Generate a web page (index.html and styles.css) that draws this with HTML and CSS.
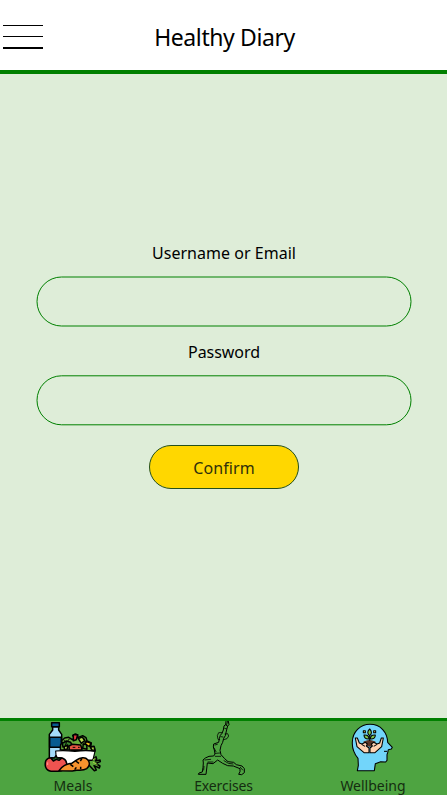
FILE: index.html
```html
<!DOCTYPE html>
<html lang="en">
<head>
<meta charset="utf-8">
<title>Healthy Diary</title>
<link rel="stylesheet" href="styles.css">
</head>
<body>
<header class="header">
  <button class="menu" aria-label="Menu"><span class="bar"></span><span class="bar"></span><span class="bar bar-thick"></span></button>
  <h1 class="title">Healthy Diary</h1>
</header>
<main class="main">
  <form class="form">
    <label class="label label-user" for="user">Username or Email</label>
    <input class="field field-user" id="user" type="text">
    <label class="label label-pass" for="pass">Password</label>
    <input class="field field-pass" id="pass" type="password">
    <button class="confirm" type="button">Confirm</button>
  </form>
</main>
<nav class="nav">
  <a class="item">
    <svg class="icon" width="56" height="53" viewBox="30 27 168 159" stroke="#000" stroke-width="4.5" stroke-linejoin="round">
      <path d="M50 32H73V44H50Z" fill="#075b91"/>
      <path d="M53 45H71V54L80 67V148H43V67L53 54Z" fill="#a4dcfa"/>
      <path d="M44 76H79V106H44Z" fill="#075b91"/>
      <path d="M76 113L77 97L84 94L79 87L89 78L101 76L112 83L119 79L113 71L121 66L128 69L128 77L143 71L153 77L156 87L169 93L167 103L178 105L180 117Z" fill="#69ad3b"/>
      <path d="M82 94L94 87L107 91L111 99L98 105L84 105Z" fill="#3c872e"/>
      <path d="M115 68L128 68L124 83L115 86Z" fill="#e6393e"/>
      <path d="M130 80L142 75L149 86L139 94Z" fill="#b6db4d"/>
      <path d="M153 88L168 94L163 103L151 98Z" fill="#ffc51b"/>
      <path d="M102 102L112 97L137 99L141 113L103 114Z" fill="#e85643"/>
      <path d="M145 96L155 98L156 112L143 109Z" fill="#5aa638"/>
      <path d="M88 104L98 99L97 111L88 113Z" fill="#bbda50"/>
      <path d="M166 106L177 103L180 115L171 114Z" fill="#b4d847"/>
      <path d="M86 84L94 92L103 81M94 92L90 103M146 78L151 90L143 99M113 106H121M129 106H134" fill="none" stroke-width="3"/>
      <path d="M62 117Q85 114 120 118Q155 114 180 118L174 143L160 160H80L64 143Z" fill="#fff" stroke-width="3.5"/>
      <path d="M33 145C39 136 49 136 60 139C80 133 94 141 95 155C95 170 83 179 67 178H48C30 174 28 158 33 145Z" fill="#ef5350"/>
      <path d="M48 139L59 137L63 131L67 138L81 138L72 145L64 142L55 147Z" fill="#24752b"/>
      <path d="M160 145L172 145L183 134L185 141L181 147L195 144L196 149L182 154L195 162L193 168L177 161L184 174L178 176L161 158Z" fill="#5aa638"/>
      <path d="M72 176C82 162 95 155 110 154L123 145C136 136 151 134 158 143C166 151 164 163 155 170C145 177 134 174 125 175L112 177Z" fill="#f7932e"/>
      <path d="M122 147L132 154M141 139L136 147M106 157L115 164M137 164V172M119 173L124 166" fill="none"/>
      <path d="M174 151L187 157M173 144L181 139" fill="none" stroke="#a4cf43" stroke-width="3"/>
      <path d="M38 151V159" fill="none" stroke="#ff9b91" stroke-width="3"/>
    </svg>
    <span class="caption">Meals</span>
  </a>
  <a class="item">
    <svg class="icon" width="56" height="53" viewBox="30 27 168 159" fill="none" stroke="#000" stroke-width="3" stroke-linejoin="round" stroke-linecap="round">
      <path d="M123 28L122 37L117 42L115 54L111 64L106 70L103 80L101 91L86 96L85 105L88 114L90 126L86 132L72 133L61 138L54 144L55 153L54 166L52 180L42 183L40 187L63 187L65 171L67 153L84 155L98 144L113 154L128 161L145 162L165 170L165 179L161 187L170 188L178 182V170L171 162L154 158L146 151L129 149L119 140L108 128L105 115L108 101L113 91L116 79L121 71L125 53L128 42L132 38L130 28"/>
      <path d="M104 83L99 82L97 71L101 62L111 62M116 83L126 80L131 72L128 65L120 66M108 74L114 75M121 38L127 42M119 49L125 51M91 124L105 123M60 144L77 142M69 150L84 150M91 133L107 133M117 146L130 154L144 156M57 163L56 174M166 166L173 174M90 99L97 97M87 108L93 119M128 28L124 40" stroke-width="2.4"/>
    </svg>
    <span class="caption caption-exercises">Exercises</span>
  </a>
  <a class="item">
    <svg class="icon" width="56" height="53" viewBox="30 27 168 159" stroke="#000" stroke-width="3.2" stroke-linejoin="round">
      <path d="M67 176L70 160L69 139C59 127 51 111 52 91C52 60 76 37 105 37C137 37 157 61 158 91L172 106L169 111L160 113L158 122L156 128V145L152 150L137 149L121 155L118 176Z" fill="#72d5fa"/>
      <path d="M87 90Q103 81 120 90L117 98L104 103L91 98Z" fill="#5a3425" stroke="#5a3425"/>
      <path d="M61 78L67 78L73 93L81 96L91 91L97 96L94 102L102 108V122H87L66 104Z" fill="#ffd2b1"/>
      <path d="M145 78L139 78L134 93L126 96L116 91L109 96L112 102L105 108V122H120L140 104Z" fill="#ffd2b1"/>
      <path d="M80 97L90 103M126 97L116 103M104 86V69" fill="none"/>
      <path d="M104 51C96 58 97 66 104 71C111 65 111 58 104 51Z" fill="#80c74c"/>
      <path d="M87 69C97 68 102 72 102 81C92 82 87 77 87 69ZM121 69C111 68 106 72 106 81C116 82 121 77 121 69Z" fill="#80c74c"/>
      <path d="M85 56H91V62H85ZM116 56H122V62H116Z" fill="#ffe15b"/>
      <path d="M147 118H156" fill="none"/>
    </svg>
    <span class="caption">Wellbeing</span>
  </a>
</nav>
</body>
</html>
```
FILE: styles.css
```css
* { box-sizing: border-box; }
body {
  margin: 0;
  height: 795px;
  display: flex;
  flex-direction: column;
  overflow: hidden;
  background: #deedd8;
  color: #000;
  font-family: "Noto Sans", "Open Sans", sans-serif;
}
.header {
  height: 74px;
  flex: none;
  display: grid;
  grid-template-columns: 46px 1fr 46px;
  background: #fff;
  border-bottom: 4px solid #008000;
}
.menu {
  display: flex;
  flex-direction: column;
  gap: 10px;
  padding: 25px 3px 0;
  border: 0;
  background: none;
}
.bar { width: 40px; height: 1px; background: #000; }
.bar-thick { height: 2px; }
.title {
  margin: 0;
  padding-left: 2px;
  text-align: center;
  font-size: 23px;
  line-height: 74px;
  font-weight: 400;
  letter-spacing: -0.4px;
}
.main { flex: 1; padding-top: 167px; }
.form { display: flex; flex-direction: column; align-items: center; padding-left: 1px; }
.label { font-size: 16px; line-height: 24px; white-space: nowrap; }
.label-user { letter-spacing: 0.02px; }
.label-pass { margin-top: 13px; letter-spacing: -0.05px; }
.field {
  width: 375px;
  height: 50px;
  padding: 0 24px;
  border: 1px solid #008000;
  border-radius: 25px;
  background: transparent;
  font: inherit;
}
.field-user { margin-top: 12px; transform: translate(-0.5px, -0.5px); }
.field-pass { margin-top: 11px; transform: translate(-0.5px, 0.3px); }
.confirm {
  width: 150px;
  height: 44px;
  margin-top: 20px;
  padding: 1px 0 0;
  border: 1px solid #24501c;
  border-radius: 22px;
  background: #ffd700;
  color: #30300b;
  font: 16px/42px "Noto Sans", "Open Sans", sans-serif;
  letter-spacing: 0.1px;
}
.nav {
  height: 77px;
  flex: none;
  display: grid;
  grid-template-columns: 146px 154px 1fr;
  padding-right: 1px;
  border-top: 3px solid #008000;
  background: #4ea441;
}
.item { display: flex; flex-direction: column; align-items: center; }
.icon { display: block; overflow: visible; }
.caption { font-size: 14px; line-height: 24px; color: #142d10; white-space: nowrap; }
.caption-exercises { padding-left: 1px; letter-spacing: -0.15px; }
```
